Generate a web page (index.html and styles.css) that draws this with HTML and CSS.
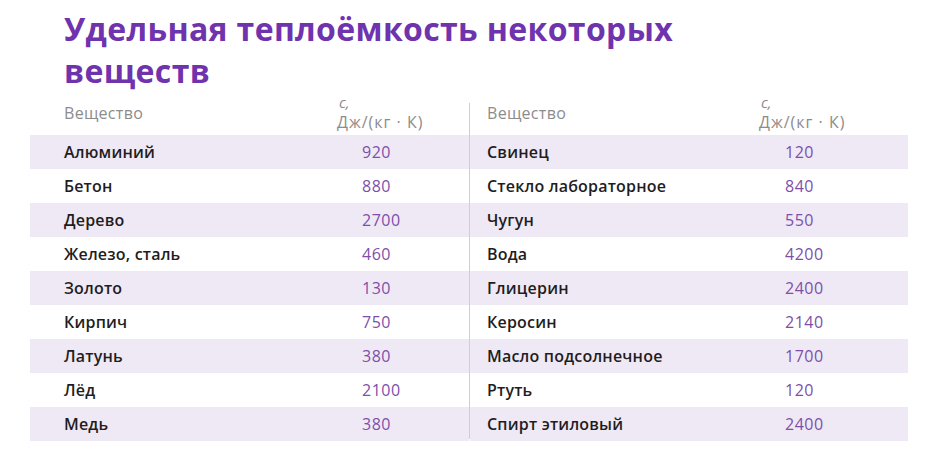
FILE: index.html
```html
<!DOCTYPE html>
<html lang="ru">
<head>
<meta charset="utf-8">
<title>Удельная теплоёмкость некоторых веществ</title>
<link rel="stylesheet" href="styles.css">
</head>
<body>
<main class="page">
  <h1 class="title">Удельная теплоёмкость некоторых<br>веществ</h1>
  <div class="tables">
    <div class="table table-left">
      <div class="head">
        <div class="head-name">Вещество</div>
        <div class="head-unit"><span class="c">c,</span><span class="u">Дж/(кг · К)</span></div>
      </div>
      <div class="row shade"><span class="name">Алюминий</span><span class="val">920</span></div>
      <div class="row"><span class="name">Бетон</span><span class="val">880</span></div>
      <div class="row shade"><span class="name">Дерево</span><span class="val">2700</span></div>
      <div class="row"><span class="name">Железо, сталь</span><span class="val">460</span></div>
      <div class="row shade"><span class="name">Золото</span><span class="val">130</span></div>
      <div class="row"><span class="name">Кирпич</span><span class="val">750</span></div>
      <div class="row shade"><span class="name">Латунь</span><span class="val">380</span></div>
      <div class="row"><span class="name">Лёд</span><span class="val">2100</span></div>
      <div class="row shade"><span class="name">Медь</span><span class="val">380</span></div>
    </div>
    <div class="divider"></div>
    <div class="table table-right">
      <div class="head">
        <div class="head-name">Вещество</div>
        <div class="head-unit"><span class="c">c,</span><span class="u">Дж/(кг · К)</span></div>
      </div>
      <div class="row shade"><span class="name">Свинец</span><span class="val">120</span></div>
      <div class="row"><span class="name">Стекло лабораторное</span><span class="val">840</span></div>
      <div class="row shade"><span class="name">Чугун</span><span class="val">550</span></div>
      <div class="row"><span class="name">Вода</span><span class="val">4200</span></div>
      <div class="row shade"><span class="name">Глицерин</span><span class="val">2400</span></div>
      <div class="row"><span class="name">Керосин</span><span class="val">2140</span></div>
      <div class="row shade"><span class="name">Масло подсолнечное</span><span class="val">1700</span></div>
      <div class="row"><span class="name">Ртуть</span><span class="val">120</span></div>
      <div class="row shade"><span class="name">Спирт этиловый</span><span class="val">2400</span></div>
    </div>
  </div>
</main>
</body>
</html>
```

FILE: styles.css
```css
html, body {
  margin: 0;
  padding: 0;
  background: #ffffff;
}

.page {
  width: 928px;
  height: 465px;
  overflow: hidden;
  font-family: "Open Sans", "Noto Sans", sans-serif;
}

.title {
  margin: 0;
  padding: 8px 0 0 64px;
  font-size: 32px;
  line-height: 42px;
  font-weight: 700;
  color: #7033ae;
  letter-spacing: 0.35px;
}

.tables {
  display: flex;
  margin: 1px 0 0 30px;
}

.table {
  display: flex;
  flex-direction: column;
}

.table-left {
  width: 439px;
  --pad: 34px;
  --namew: 273px;
  --valpad: 25px;
}

.table-right {
  width: 438px;
  --pad: 17px;
  --namew: 272px;
  --valpad: 26px;
}

.divider {
  width: 1px;
  background: #cfcfcf;
  margin: 10px 0 2px 0;
}

.head {
  display: flex;
  align-items: stretch;
  height: 42px;
  padding-left: var(--pad);
  color: #8c8c8c;
  font-size: 16px;
}

.head-name {
  width: var(--namew);
  align-self: center;
  padding-bottom: 2px;
  letter-spacing: 0.3px;
}

.head-unit {
  display: flex;
  flex-direction: column;
}

.head-unit .c {
  font-style: italic;
  padding-left: 2px;
  line-height: 19px;
  font-size: 15px;
}

.head-unit .u {
  line-height: 21px;
  font-size: 16px;
  letter-spacing: 1px;
}

.row {
  display: flex;
  align-items: center;
  height: 34px;
  padding-left: var(--pad);
  font-size: 16px;
}

.row.shade {
  background: #efe9f5;
}

.name {
  width: var(--namew);
  font-weight: 600;
  color: #1f1d22;
  letter-spacing: 0.2px;
}

.val {
  padding-left: var(--valpad);
  color: #7d4fab;
  font-weight: 500;
  letter-spacing: 0.5px;
}
```
